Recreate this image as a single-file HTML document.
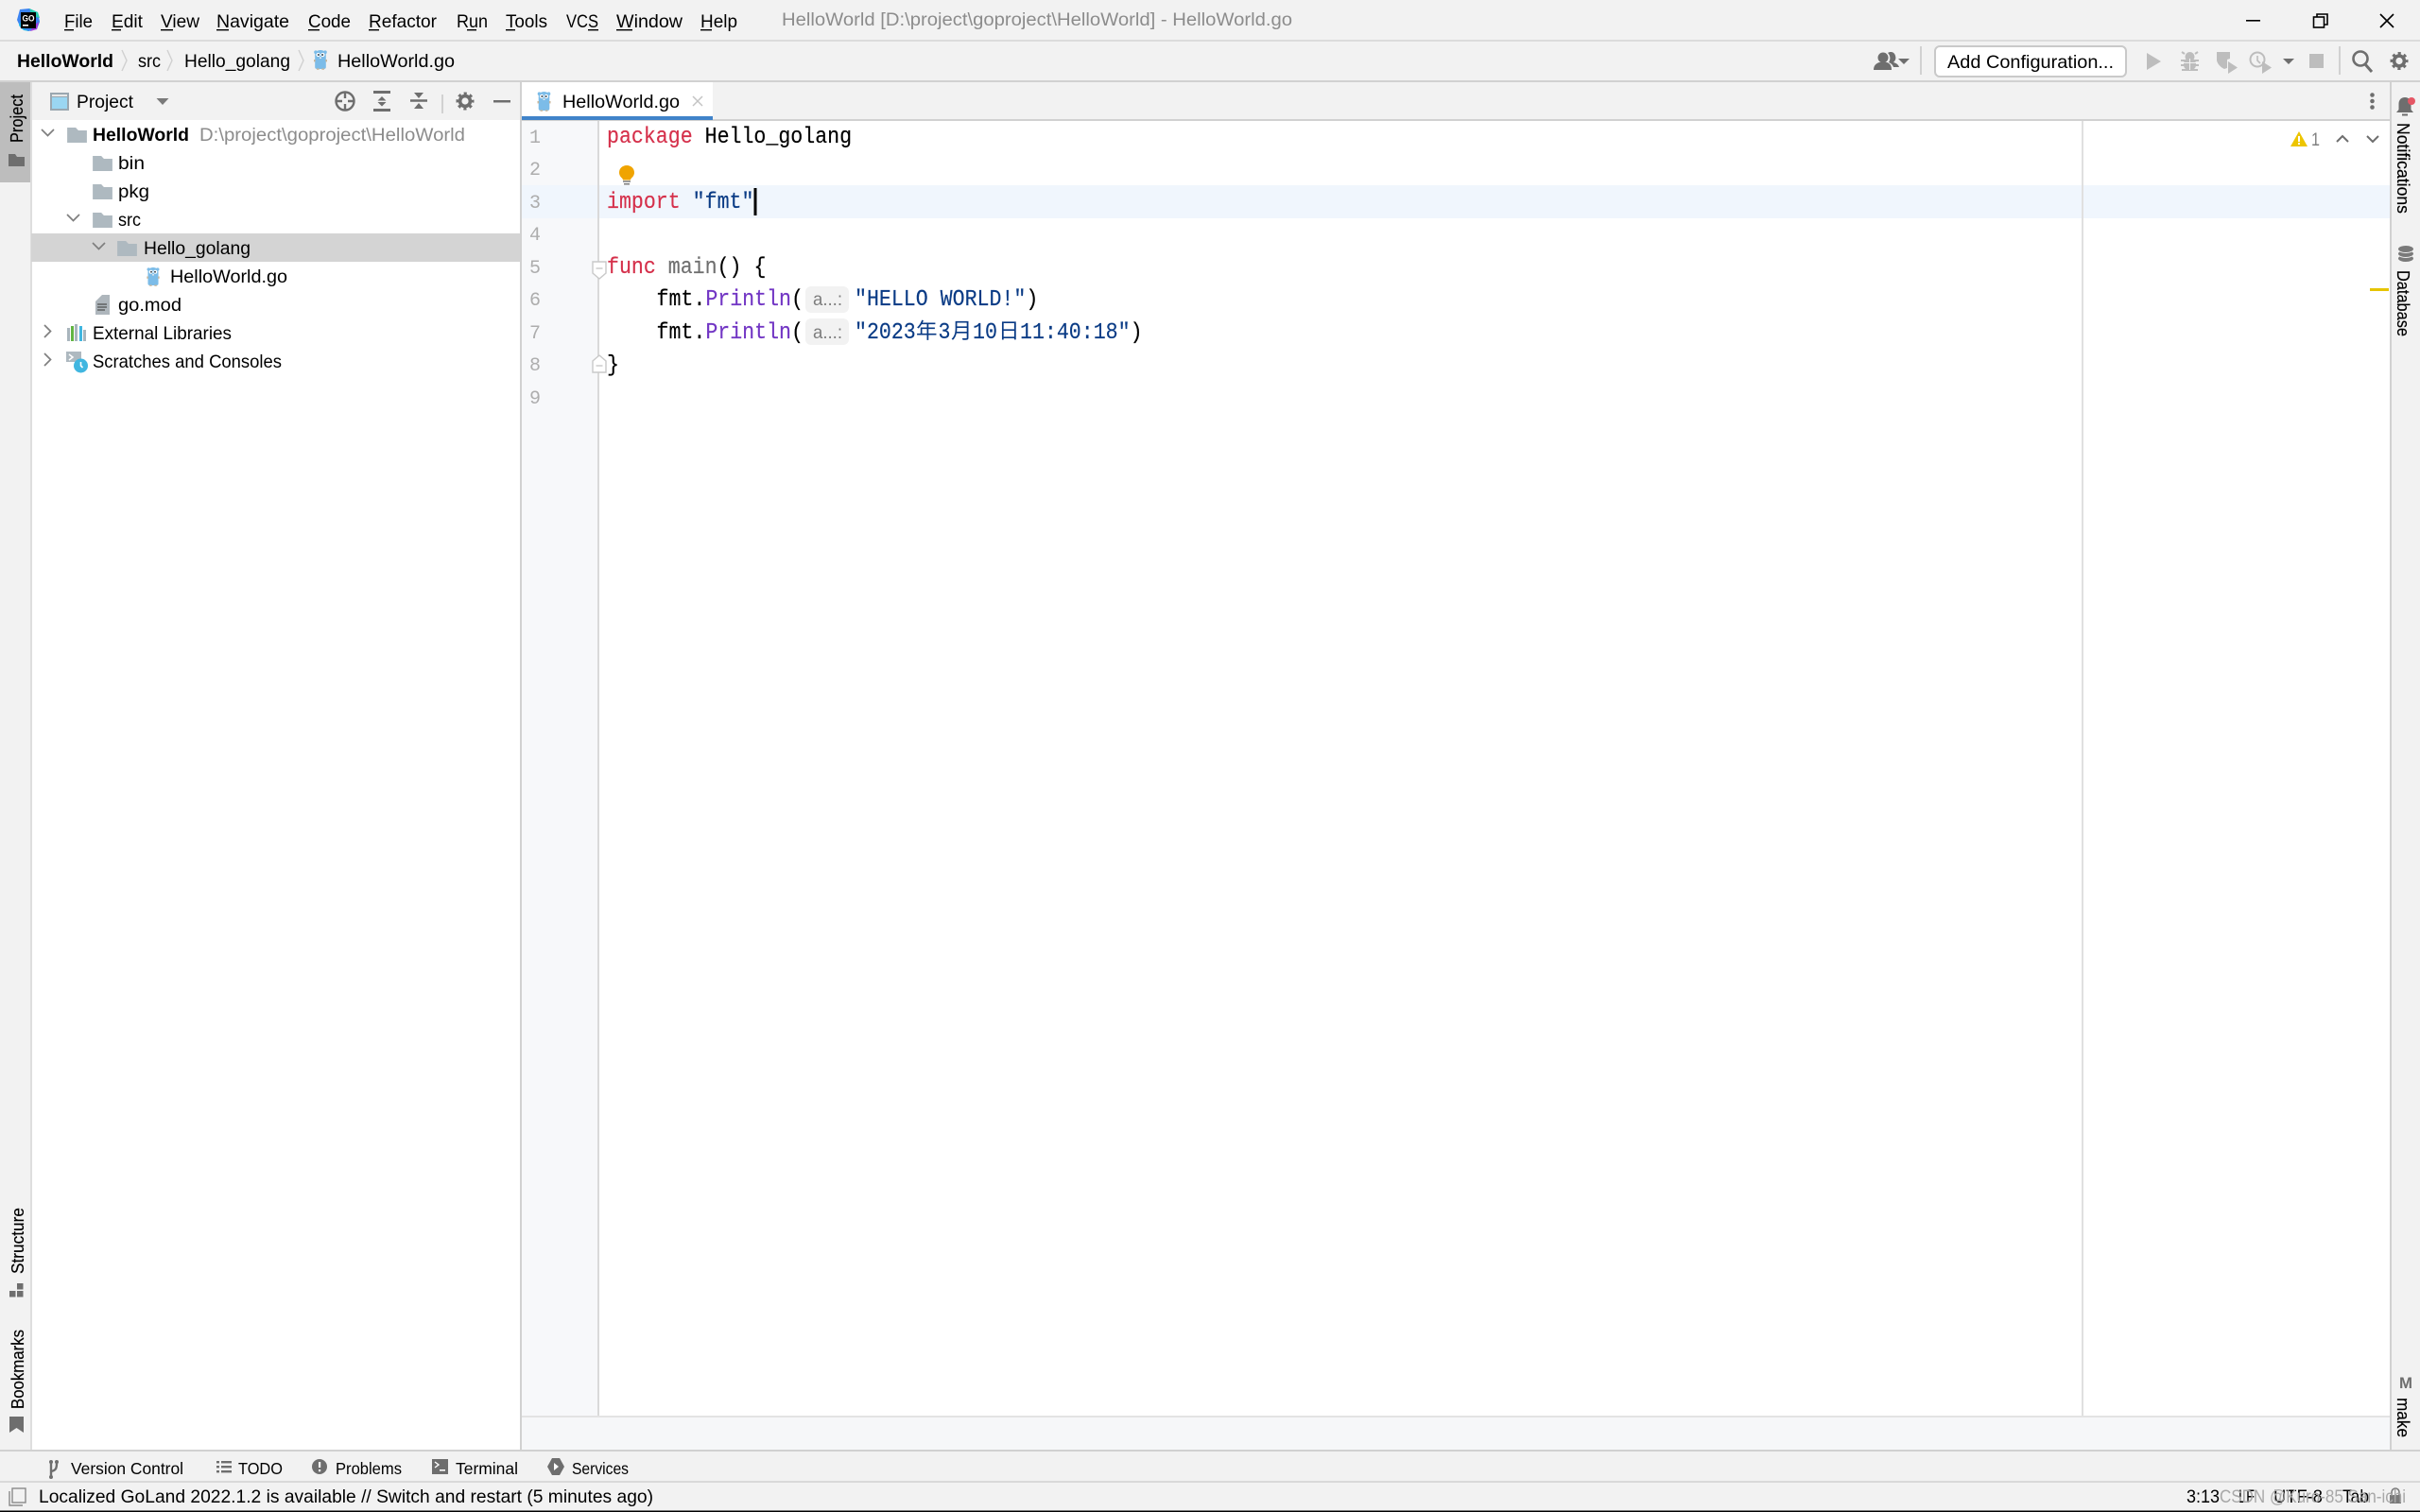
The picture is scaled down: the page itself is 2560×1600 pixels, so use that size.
<!DOCTYPE html>
<html lang="en">
<head>
<meta charset="utf-8">
<title>HelloWorld - HelloWorld.go</title>
<style>
html,body{margin:0;padding:0;width:2560px;height:1600px;overflow:hidden;background:#f2f2f2}
svg{display:block}
text{font-family:"Liberation Sans","Noto Sans CJK SC",sans-serif;font-size:19.5px;fill:#000;white-space:pre}
.m{font-family:"Liberation Mono","Noto Sans CJK SC",monospace;font-size:21.6px;stroke:currentColor;stroke-width:.15px}
.k{fill:#d5304b;color:#d5304b}.s{fill:#0a3b85;color:#0a3b85}.f{fill:#7236c4;color:#7236c4}.g{fill:#6f6f6f;color:#6f6f6f}
.n{font-family:"Liberation Mono",monospace;font-size:20px;fill:#adadad}
.b{font-weight:bold}
.v{font-size:18px;stroke:#000;stroke-width:.2px}
.t{font-size:17.5px}
</style>
</head>
<body>
<svg xmlns="http://www.w3.org/2000/svg" width="2560" height="1600" viewBox="0 0 2560 1600">
<defs>
<symbol id="gopher" viewBox="0 0 16 22" overflow="visible">
<circle cx="3" cy="3.2" r="1.8" fill="#7cbce8"/><circle cx="13" cy="3.2" r="1.8" fill="#7cbce8"/>
<path d="M2.2 6.5C2.2 2.8 4.8 1 8 1s5.800 1.800 5.800 5.500V19c0 1.400-1 2-2.200 2H4.400c-1.200 0-2.200-.6-2.200-2z" fill="#7cbce8"/>
<circle cx="5.600" cy="6" r="2.100" fill="#fff"/><circle cx="10.400" cy="6" r="2.100" fill="#fff"/>
<circle cx="5.900" cy="6" r="1" fill="#30424f"/><circle cx="10.100" cy="6" r="1" fill="#30424f"/>
<rect x="7" y="8.400" width="2" height="1.600" fill="#dfe8ee"/>
<rect x="1" y="11" width="1.600" height="2.400" fill="#c9b79c"/><rect x="13.400" y="11" width="1.600" height="2.400" fill="#c9b79c"/>
<rect x="4" y="20.400" width="2.600" height="1.400" fill="#c9b79c"/><rect x="9.400" y="20.400" width="2.600" height="1.400" fill="#c9b79c"/>
</symbol>
<symbol id="folder" viewBox="0 0 22 18" overflow="visible">
<path d="M0 1h9.500l3 3.200H22V18H0z" fill="#aeb9c0"/>
</symbol>
<symbol id="gear" viewBox="-10 -10 20 20" overflow="visible">
<circle r="5.400" fill="none" stroke="currentColor" stroke-width="3.600"/>
<circle r="8" fill="none" stroke="currentColor" stroke-width="3" stroke-dasharray="3.100 3.180" stroke-dashoffset="1.550"/>
</symbol>
</defs>

<!-- base -->
<rect width="2560" height="1600" fill="#f2f2f2"/>
<rect x="0" y="42" width="2560" height="2" fill="#dcdcdc"/>
<rect x="0" y="85" width="2560" height="2" fill="#d1d1d1"/>

<!-- app logo -->
<g transform="translate(18,9)">
<path d="M3 1 13 0l9 4 2 10-3 8-9 2-8-3-4-9z" fill="#3b82f0"/>
<path d="M13 0l9 4 2 6-8-2z" fill="#27d0b0"/>
<path d="M3 14l4 7 6 3-6-1-5-5z" fill="#18b4e8"/>
<path d="M18 18l5-4-2 8-7 2z" fill="#a33be0"/>
<rect x="4" y="4" width="16" height="17" fill="#000"/>
<text x="5.500" y="13.500" style="font-size:9px;font-weight:bold;fill:#fff" textLength="13" lengthAdjust="spacingAndGlyphs">GO</text>
<rect x="6" y="17" width="6" height="1.600" fill="#fff"/>
</g>

<!-- menu -->
<g>
<text x="68" y="29" textLength="30" lengthAdjust="spacingAndGlyphs">File</text>
<text x="118" y="29" textLength="33" lengthAdjust="spacingAndGlyphs">Edit</text>
<text x="170" y="29" textLength="41" lengthAdjust="spacingAndGlyphs">View</text>
<text x="229" y="29" textLength="77" lengthAdjust="spacingAndGlyphs">Navigate</text>
<text x="326" y="29" textLength="45" lengthAdjust="spacingAndGlyphs">Code</text>
<text x="390" y="29" textLength="72" lengthAdjust="spacingAndGlyphs">Refactor</text>
<text x="483" y="29" textLength="33" lengthAdjust="spacingAndGlyphs">Run</text>
<text x="535" y="29" textLength="44" lengthAdjust="spacingAndGlyphs">Tools</text>
<text x="599" y="29" textLength="34" lengthAdjust="spacingAndGlyphs">VCS</text>
<text x="652" y="29" textLength="70" lengthAdjust="spacingAndGlyphs">Window</text>
<text x="741" y="29" textLength="39" lengthAdjust="spacingAndGlyphs">Help</text>
<g fill="#000">
<rect x="68" y="31" width="10" height="1.400"/><rect x="118" y="31" width="10" height="1.400"/><rect x="170" y="31" width="13" height="1.400"/>
<rect x="229" y="31" width="13" height="1.400"/><rect x="326" y="31" width="12" height="1.400"/><rect x="390" y="31" width="11" height="1.400"/>
<rect x="494" y="31" width="10" height="1.400"/><rect x="535" y="31" width="10" height="1.400"/><rect x="622" y="31" width="11" height="1.400"/>
<rect x="652" y="31" width="17" height="1.400"/><rect x="741" y="31" width="12" height="1.400"/>
</g>
</g>
<text x="827" y="27" style="fill:#8c8c8c" textLength="540" lengthAdjust="spacingAndGlyphs">HelloWorld [D:\project\goproject\HelloWorld] - HelloWorld.go</text>

<!-- window controls -->
<rect x="2376" y="21" width="15" height="1.600" fill="#000"/>
<g fill="none" stroke="#000" stroke-width="1.600"><rect x="2447.500" y="18" width="11" height="11" fill="#f2f2f2"/><path d="M2451 18v-3h11v11h-3.500"/>
<path d="M2518 15l14 14M2532 15l-14 14"/></g>

<!-- breadcrumb -->
<text class="b" x="18" y="71" textLength="102" lengthAdjust="spacingAndGlyphs">HelloWorld</text>
<text x="146" y="71" textLength="24" lengthAdjust="spacingAndGlyphs">src</text>
<text x="195" y="71" textLength="112" lengthAdjust="spacingAndGlyphs">Hello_golang</text>
<text x="357" y="71" textLength="124" lengthAdjust="spacingAndGlyphs">HelloWorld.go</text>
<g fill="none" stroke="#d0d0d0" stroke-width="1.400"><path d="M129 53l5 11-5 11M177 53l5 11-5 11M316 53l5 11-5 11"/></g>
<use href="#gopher" x="331" y="52" width="16" height="22"/>

<!-- toolbar right -->
<g fill="#6e6e6e">
<path d="M1997 56c3-2 7-1 8 3 1 3 0 5-2 7 3 1 5 2 6 5h-6c-1-3-3-4-5-5 2-3 2-7-1-10z"/>
<circle cx="1992" cy="61" r="5.500"/><path d="M1982 74c0-5 3-7 6-8h8c3 1 5 3 5 8z"/>
<path d="M2008 62h12l-6 6z"/>
</g>
<rect x="2031" y="49" width="2" height="30" fill="#d1d1d1"/>
<rect x="2047" y="49" width="202" height="32" rx="5" fill="#fff" stroke="#c9c9c9" stroke-width="2"/>
<text x="2060" y="72" textLength="176" lengthAdjust="spacingAndGlyphs">Add Configuration...</text>
<g fill="#bdbdbd">
<path d="M2271 56l15 9-15 9z"/>
<circle cx="2316.500" cy="60" r="5"/>
<path d="M2311 57l-3-2M2322 57l3-2" stroke="#bdbdbd" stroke-width="2"/>
<rect x="2310" y="62" width="13" height="12" rx="5"/>
<path d="M2307 64h19M2307 69h19M2308 74h17" stroke="#bdbdbd" stroke-width="2"/>
<path d="M2316.500 62v12" stroke="#f2f2f2" stroke-width="1"/>
<path d="M2310 66.500h13" stroke="#f2f2f2" stroke-width="1"/>
<path d="M2345 55h14v7l-3 1v9l-3 1c-4-2-7-5-8-9z"/><path d="M2357 65l10 6.500-10 6.500z"/>
<path d="M2393 65l10 6.500-10 6.500z"/>
<circle cx="2388" cy="63" r="7.500" fill="none" stroke="#bdbdbd" stroke-width="2"/><path d="M2388 59v5l3 3" fill="none" stroke="#bdbdbd" stroke-width="1.600"/>
<rect x="2443" y="57" width="15" height="15"/>
</g>
<path d="M2415 62h12l-6 6z" fill="#6e6e6e"/>
<rect x="2474" y="49" width="2" height="30" fill="#d1d1d1"/>
<circle cx="2497" cy="62" r="7.500" fill="none" stroke="#6e6e6e" stroke-width="2.600"/><path d="M2502 68l7 8" stroke="#6e6e6e" stroke-width="3"/>
<use href="#gear" x="2528" y="54.500" width="20" height="20" color="#6e6e6e"/>

<!-- left strip -->
<rect x="0" y="87" width="32" height="106" fill="#bdbdbd"/>
<rect x="32" y="87" width="2" height="1447" fill="#dedede"/>
<text class="v" transform="translate(24,151) rotate(-90)" textLength="51" lengthAdjust="spacingAndGlyphs">Project</text>
<path d="M9 163h7l2 3h8v10H9z" fill="#6e6e6e"/>
<text class="v" transform="translate(25,1348) rotate(-90)" textLength="70" lengthAdjust="spacingAndGlyphs">Structure</text>
<g fill="#6e6e6e"><rect x="10" y="1366" width="6.500" height="6.500"/><rect x="18" y="1366" width="6.500" height="6.500"/><rect x="18" y="1358" width="6.500" height="6.500"/></g>
<text class="v" transform="translate(25,1491) rotate(-90)" textLength="84" lengthAdjust="spacingAndGlyphs">Bookmarks</text>
<path d="M10 1499h15v17l-7.500-5-7.500 5z" fill="#6e6e6e"/>

<!-- project panel -->
<rect x="34" y="127" width="516" height="1407" fill="#fff"/>
<rect x="550" y="87" width="2" height="1447" fill="#d1d1d1"/>
<rect x="53" y="98" width="20" height="19" fill="#9aa7b0"/>
<rect x="55" y="103" width="16" height="12" fill="#9ad6f2"/>
<rect x="55" y="100" width="16" height="2" fill="#e8e8e8"/>
<text x="81" y="114" textLength="60" lengthAdjust="spacingAndGlyphs">Project</text>
<path d="M165.500 104h13l-6.500 7z" fill="#7a7a7a"/>
<g fill="none" stroke="#6e6e6e" stroke-width="2.400">
<circle cx="365" cy="107" r="9.500"/><path d="M365 97v7M365 110v7M355 107h7M368 107h7"/>
<path d="M395 97.500h18M395 116.500h18" stroke-width="3"/>
<path d="M434 106.500h18"/>
</g>
<g fill="#6e6e6e">
<path d="M404 102l4.500 4.500h-9zM404 112.500l-4.500-4.500h9z"/>
<path d="M438 98h10l-5 6zM438 115h10l-5-6z"/>
</g>
<rect x="467" y="100" width="2" height="20" fill="#d1d1d1"/>
<use href="#gear" x="482" y="97" width="20" height="20" color="#6e6e6e"/>
<rect x="522" y="106" width="18" height="2.500" fill="#6e6e6e"/>

<!-- tree -->
<rect x="33" y="247" width="517" height="30" fill="#d4d4d4"/>
<g fill="none" stroke="#7f7f7f" stroke-width="1.700">
<path d="M44 137l6.500 6.500 6.500-6.500M71 227l6.500 6.500 6.500-6.500M98 257l6.500 6.500 6.500-6.500"/>
<path d="M47 344l6.500 6.500-6.500 6.500M47 374l6.500 6.500-6.500 6.500"/>
</g>
<use href="#folder" x="71" y="134" width="21" height="17"/>
<use href="#folder" x="98" y="164" width="21" height="17"/>
<use href="#folder" x="98" y="194" width="21" height="17"/>
<use href="#folder" x="98" y="224" width="21" height="17"/>
<use href="#folder" x="124" y="254" width="21" height="17"/>
<use href="#gopher" x="154" y="282" width="16" height="21"/>
<text class="b" x="98" y="149" textLength="102" lengthAdjust="spacingAndGlyphs">HelloWorld</text>
<text x="211" y="149" style="fill:#8c8c8c" textLength="281" lengthAdjust="spacingAndGlyphs">D:\project\goproject\HelloWorld</text>
<text x="125" y="179" textLength="28" lengthAdjust="spacingAndGlyphs">bin</text>
<text x="125" y="209" textLength="33" lengthAdjust="spacingAndGlyphs">pkg</text>
<text x="125" y="239" textLength="24" lengthAdjust="spacingAndGlyphs">src</text>
<text x="152" y="269" textLength="113" lengthAdjust="spacingAndGlyphs">Hello_golang</text>
<text x="180" y="299" textLength="124" lengthAdjust="spacingAndGlyphs">HelloWorld.go</text>
<text x="125" y="329" textLength="67" lengthAdjust="spacingAndGlyphs">go.mod</text>
<text x="98" y="359" textLength="147" lengthAdjust="spacingAndGlyphs">External Libraries</text>
<text x="98" y="389" textLength="200" lengthAdjust="spacingAndGlyphs">Scratches and Consoles</text>
<!-- go.mod icon -->
<path d="M101 319l7-7h8v21h-15z" fill="#aeb6bc"/>
<path d="M103 322h10M103 325h10M103 328h8" stroke="#4f4f4f" stroke-width="1.300"/>
<!-- libs icon -->
<g>
<rect x="71" y="347" width="3" height="14" fill="#a9b5bd"/><rect x="75" y="345" width="3" height="16" fill="#62b543"/>
<rect x="79" y="343" width="3" height="18" fill="#a9b5bd"/><rect x="84" y="345" width="3" height="16" fill="#40b6e0"/><rect x="88" y="349" width="3" height="12" fill="#a9b5bd"/>
</g>
<!-- scratches icon -->
<path d="M70 372h16v11H70z" fill="#aeb9c0"/>
<path d="M73 375l4 3-4 3" fill="none" stroke="#fff" stroke-width="1.500"/>
<circle cx="85.500" cy="387" r="7.500" fill="#40b6e0"/><path d="M85.500 383v4l2 2" fill="none" stroke="#fff" stroke-width="1.600"/>

<!-- tabs -->
<rect x="552" y="87" width="202" height="36" fill="#fff"/>
<rect x="552" y="126" width="1976" height="2" fill="#d1d1d1"/>
<rect x="552" y="123" width="202" height="4" fill="#4083c9"/>
<use href="#gopher" x="567.500" y="96" width="16" height="22"/>
<text x="595" y="114" textLength="124" lengthAdjust="spacingAndGlyphs">HelloWorld.go</text>
<path d="M733 102l10 10M743 102l-10 10" stroke="#c4c4c4" stroke-width="1.500"/>
<g fill="#6e6e6e"><circle cx="2509.500" cy="100.500" r="2.300"/><circle cx="2509.500" cy="107" r="2.300"/><circle cx="2509.500" cy="113.500" r="2.300"/></g>

<!-- editor -->
<rect x="552" y="128" width="1976" height="1370" fill="#fff"/>
<rect x="552" y="128" width="80" height="1370" fill="#f7f8fa"/>
<rect x="552" y="196" width="1976" height="35" fill="#f0f6fd"/>
<rect x="632" y="128" width="2" height="1370" fill="#d9d9d9"/>
<rect x="2202" y="128" width="2" height="1370" fill="#e0e0e0"/>
<rect x="552" y="1498" width="1976" height="2" fill="#e3e3e3"/>
<rect x="552" y="1500" width="1976" height="34" fill="#f6f7f9"/>
<rect x="0" y="1534" width="2560" height="2" fill="#d1d1d1"/>
<rect x="0" y="1567" width="2560" height="2" fill="#d9d9d9"/>
<rect x="2528" y="87" width="2" height="1447" fill="#d1d1d1"/>

<g>
<text class="n" x="560" y="151">1</text>
<text class="n" x="560" y="185">2</text>
<text class="n" x="560" y="220">3</text>
<text class="n" x="560" y="254">4</text>
<text class="n" x="560" y="289">5</text>
<text class="n" x="560" y="323">6</text>
<text class="n" x="560" y="358">7</text>
<text class="n" x="560" y="392">8</text>
<text class="n" x="560" y="427">9</text>
</g>

<text class="m" transform="translate(642,151) scale(1,1.1)"><tspan class="k">package</tspan> Hello_golang</text>
<text class="m" transform="translate(642,220) scale(1,1.1)"><tspan class="k">import</tspan> <tspan class="s">"fmt"</tspan></text>
<text class="m" transform="translate(642,289) scale(1,1.1)"><tspan class="k">func</tspan> <tspan class="g">main</tspan>() {</text>
<text class="m" transform="translate(694.500,323) scale(1,1.1)">fmt.<tspan class="f">Println</tspan>(</text>
<rect x="852" y="303" width="46" height="28" rx="6" fill="#f2f2f2"/>
<text x="860" y="323" style="fill:#7d7d7d" textLength="31" lengthAdjust="spacingAndGlyphs">a...:</text>
<text class="m s" transform="translate(904,323) scale(1,1.1)">"HELLO WORLD!"<tspan style="fill:#000;color:#000;stroke:#000">)</tspan></text>
<text class="m" transform="translate(694.500,358) scale(1,1.1)">fmt.<tspan class="f">Println</tspan>(</text>
<rect x="852" y="337" width="46" height="28" rx="6" fill="#f2f2f2"/>
<text x="860" y="358" style="fill:#7d7d7d" textLength="31" lengthAdjust="spacingAndGlyphs">a...:</text>
<text class="m s" transform="translate(904,358) scale(1,1.1)">"2023</text>
<text class="m s" x="969" y="358" style="font-size:22.500px;stroke-width:0">年</text>
<text class="m s" transform="translate(992.500,358) scale(1,1.1)">3</text>
<text class="m s" x="1006" y="358" style="font-size:22.500px;stroke-width:0">月</text>
<text class="m s" transform="translate(1029,358) scale(1,1.1)">10</text>
<text class="m s" x="1056" y="358" style="font-size:22.500px;stroke-width:0">日</text>
<text class="m s" transform="translate(1079,358) scale(1,1.1)">11:40:18"<tspan style="fill:#000;color:#000;stroke:#000">)</tspan></text>
<text class="m" transform="translate(642,392.500) scale(1,1.1)">}</text>

<!-- caret -->
<rect x="797.500" y="199" width="3" height="29" fill="#000"/>

<!-- bulb -->
<path d="M663 175c-4.500 0-8 3.300-8 7.500 0 3 1.800 5 3.500 6.500l.5 1.500h8l.5-1.500c1.700-1.500 3.500-3.500 3.500-6.500 0-4.200-3.500-7.500-8-7.500z" fill="#f0a400"/>
<path d="M659 192h8M660 194.800h6" stroke="#7a7a7a" stroke-width="1.500"/>

<!-- folds -->
<g fill="#fff" stroke="#c9c9c9" stroke-width="1.400">
<path d="M627 277h14v12l-7 6-7-6z"/><path d="M630.500 284h7"/>
<path d="M627 394h14v-12l-7-6-7 6z"/><path d="M630.500 387h7"/>
</g>

<!-- inspections -->
<path d="M2432 139l9 16h-18z" fill="#edc500"/>
<rect x="2431" y="144" width="2" height="6" fill="#fff"/><rect x="2431" y="151" width="2" height="2" fill="#fff"/>
<text x="2445" y="154" style="fill:#7f7f7f;font-size:19px" textLength="9" lengthAdjust="spacingAndGlyphs">1</text>
<path d="M2472 150l6-6 6 6M2504 144l6 6 6-6" fill="none" stroke="#6e6e6e" stroke-width="2"/>
<rect x="2507" y="305" width="20" height="3" fill="#e6c400"/>

<!-- right strip -->
<path d="M2544 103c-4 0-6.500 3-6.500 7v6l-2.500 3h18l-2.500-3v-6c0-4-2.500-7-6.500-7z" fill="#6e6e6e"/>
<path d="M2541 120.500h6v2h-6z" fill="#6e6e6e"/>
<circle cx="2551" cy="107" r="4" fill="#e55765"/>
<text class="v" transform="translate(2536,130) rotate(90)" textLength="96" lengthAdjust="spacingAndGlyphs">Notifications</text>
<g fill="#7a7a7a" stroke="#f2f2f2" stroke-width="1">
<ellipse cx="2545" cy="273.500" rx="8.500" ry="4"/>
<ellipse cx="2545" cy="268.500" rx="8.500" ry="4"/>
<ellipse cx="2545" cy="263.500" rx="8.500" ry="4"/>
</g>
<text class="v" transform="translate(2536,286) rotate(90)" textLength="70" lengthAdjust="spacingAndGlyphs">Database</text>
<text transform="translate(2538,1469)" style="font-weight:bold;font-size:17px;fill:#6e6e6e" textLength="14" lengthAdjust="spacingAndGlyphs">M</text>
<text class="v" transform="translate(2536,1479) rotate(90)" textLength="42" lengthAdjust="spacingAndGlyphs">make</text>

<!-- tool window bar -->
<path d="M54 1546v18" stroke="#6e6e6e" stroke-width="2.400"/><path d="M54 1557c5-1 6-3 6-9" fill="none" stroke="#6e6e6e" stroke-width="2.400"/>
<circle cx="54" cy="1547" r="2" fill="#6e6e6e"/><circle cx="60" cy="1547" r="2" fill="#6e6e6e"/><circle cx="54" cy="1563" r="2" fill="#6e6e6e"/>
<text class="t" x="75" y="1560" textLength="119" lengthAdjust="spacingAndGlyphs">Version Control</text>
<g fill="#6e6e6e">
<rect x="229" y="1546" width="3" height="2.400"/><rect x="234" y="1546" width="11" height="2.400"/>
<rect x="229" y="1551" width="3" height="2.400"/><rect x="234" y="1551" width="11" height="2.400"/>
<rect x="229" y="1556" width="3" height="2.400"/><rect x="234" y="1556" width="11" height="2.400"/>
</g>
<text class="t" x="252" y="1560" textLength="47" lengthAdjust="spacingAndGlyphs">TODO</text>
<circle cx="338" cy="1552" r="8" fill="#6e6e6e"/><rect x="337" y="1547" width="2.200" height="6" fill="#fff"/><rect x="337" y="1555" width="2.200" height="2.200" fill="#fff"/>
<text class="t" x="355" y="1560" textLength="70" lengthAdjust="spacingAndGlyphs">Problems</text>
<rect x="457" y="1544" width="17" height="16" fill="#6e6e6e"/><path d="M460 1547l4 3-4 3" fill="none" stroke="#fff" stroke-width="1.400"/><rect x="465" y="1555" width="6" height="1.600" fill="#fff"/>
<text class="t" x="482" y="1560" textLength="66" lengthAdjust="spacingAndGlyphs">Terminal</text>
<path d="M584 1543h8l5 9-5 9h-8l-5-9z" fill="#6e6e6e"/><path d="M586 1548l5 4-5 4z" fill="#fff"/>
<text class="t" x="605" y="1560" textLength="60" lengthAdjust="spacingAndGlyphs">Services</text>

<!-- status bar -->
<rect x="0" y="1569" width="2560" height="29.500" fill="#f2f2f2"/>
<rect x="0" y="1598.500" width="2560" height="1.500" fill="#000"/>
<rect x="13" y="1575" width="14" height="15" fill="#f2f2f2" stroke="#8a8a8a" stroke-width="1.400"/>
<path d="M10 1578v15h14" fill="none" stroke="#8a8a8a" stroke-width="1.400"/>
<text x="41" y="1590" textLength="650" lengthAdjust="spacingAndGlyphs">Localized GoLand 2022.1.2 is available // Switch and restart (5 minutes ago)</text>
<text x="2313" y="1590" textLength="35" lengthAdjust="spacingAndGlyphs">3:13</text>
<text x="2368" y="1590" textLength="17" lengthAdjust="spacingAndGlyphs">LF</text>
<text x="2405" y="1590" textLength="52" lengthAdjust="spacingAndGlyphs">UTF-8</text>
<text x="2478" y="1590" textLength="28" lengthAdjust="spacingAndGlyphs">Tab</text>
<path d="M2530 1582v-3a4 4 0 0 1 8 0v3" fill="none" stroke="#7a7a7a" stroke-width="1.600"/>
<rect x="2528" y="1582" width="12" height="9" fill="#7a7a7a"/>
<text x="2348" y="1590" style="fill:#a8a8a8;font-size:19px" textLength="197" lengthAdjust="spacingAndGlyphs">CSDN @Kuro-85 San-ichi</text>
</svg>
</body>
</html>
